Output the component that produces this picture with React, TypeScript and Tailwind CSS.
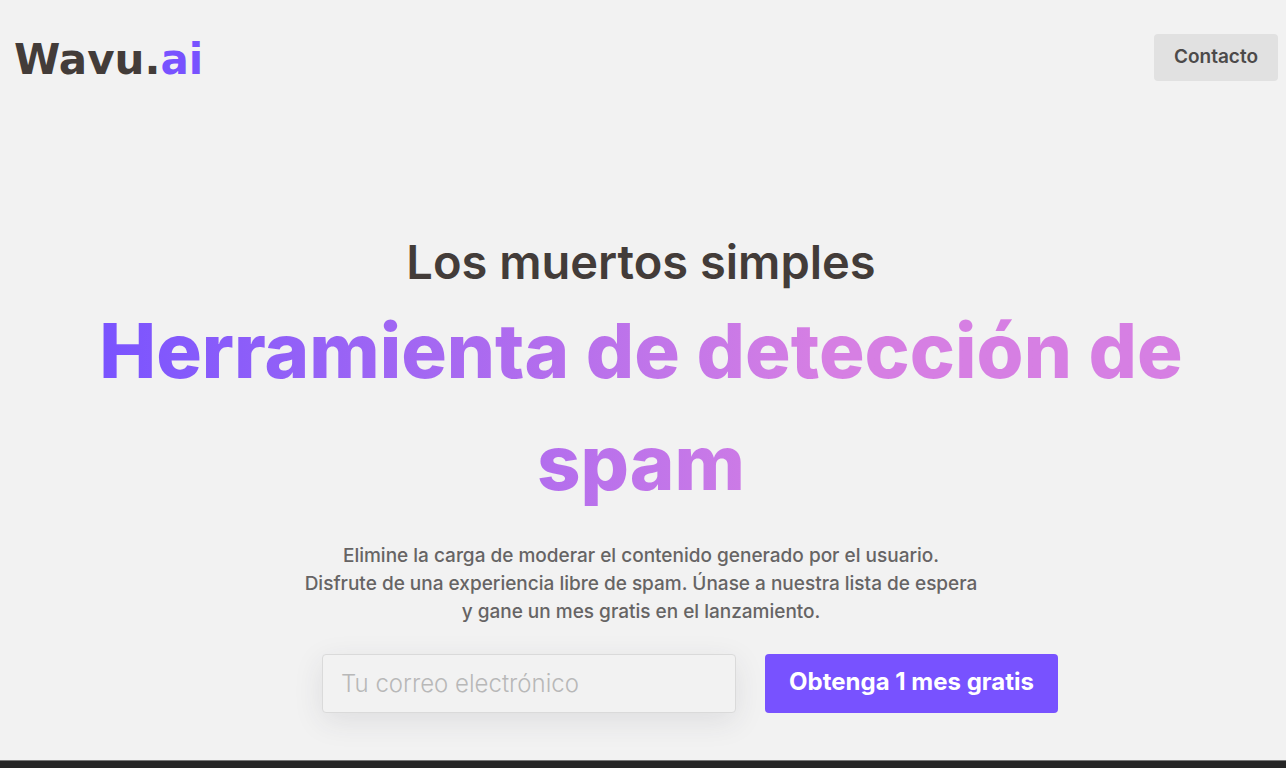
import React from 'react';

const Header: React.FC = () => {
  return (
    <header className="flex items-start justify-between pl-[14px] pr-2 pt-[34px]">
      <a
        href="#"
        className="font-['DejaVu_Sans',sans-serif] text-[42px] leading-[52px] font-bold text-[#433c39]"
      >
        Wavu.<span className="text-[#7852ff]">ai</span>
      </a>
      <button
        type="button"
        className="h-[47px] rounded bg-[#e1e1e1] px-5 pb-0.5 text-[19px] leading-6 font-semibold text-[#4c4a4a]"
      >
        Contacto
      </button>
    </header>
  );
};

const SignupForm: React.FC = () => {
  return (
    <form
      className="mt-7 flex justify-center gap-[29px] pl-[98px]"
      onSubmit={(e) => e.preventDefault()}
    >
      <input
        type="email"
        aria-label="Tu correo electrónico"
        placeholder="Tu correo electrónico"
        className="h-[59px] w-[414px] rounded border border-[#dadada] bg-[#f2f2f2] px-[18px] text-2xl font-light text-[#433c39] shadow-[0_8px_30px_rgba(50,50,71,0.1)] outline-none placeholder:text-[#b8b8b8]"
      />
      <button
        type="submit"
        className="h-[59px] rounded bg-[#7852ff] px-6 pb-1 text-2xl leading-8 font-bold whitespace-nowrap text-white"
      >
        Obtenga 1 mes gratis
      </button>
    </form>
  );
};

const App: React.FC = () => {
  return (
    <div className="flex min-h-screen flex-col bg-[#f2f2f2] font-['Inter',sans-serif]">
      <Header />

      <main className="flex-1 pr-10 pl-9 pt-36 pb-[47px] text-center">
        <h1>
          <span className="block text-[47px] leading-[64px] font-semibold text-[#433c39]">
            Los muertos simples
          </span>
          <span className="block bg-linear-to-r from-[#7852ff] from-4% via-[#b06cee] via-40% to-[#d67fe3] to-65% bg-clip-text text-[76px] leading-[112px] font-extrabold text-transparent">
            Herramienta de detección de
            <br />
            spam
          </span>
        </h1>
        <p className="mt-6 text-[19px] leading-7 font-medium text-[#666464]">
          Elimine la carga de moderar el contenido generado por el usuario.
          <br />
          Disfrute de una experiencia libre de spam. Únase a nuestra lista de espera
          <br />
          y gane un mes gratis en el lanzamiento.
        </p>
        <SignupForm />
      </main>

      <footer className="h-2 border-t border-[#777777] bg-[#262626]" />
    </div>
  );
};

export default App;
